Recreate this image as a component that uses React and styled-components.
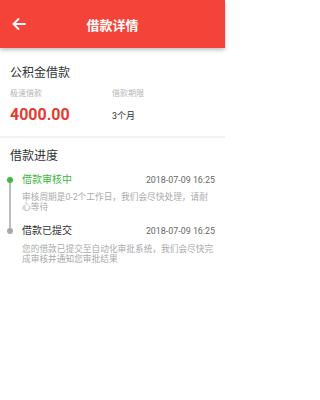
import React from 'react'
import styled, { createGlobalStyle } from 'styled-components'

const GlobalStyle = createGlobalStyle`
    body {
        margin: 0;
        background: #fff;
        font-family: Roboto, "Noto Sans CJK SC", sans-serif;
    }
`

const Page = styled.div`
    width: 225px;
    min-height: 400px;
    background: #fff;
`

const Header = styled.div`
    position: relative;
    height: 48px;
    background: #f4443a;
    box-shadow: 0 2px 4px rgba(0, 0, 0, 0.25);
    display: flex;
    align-items: center;
    justify-content: center;
    z-index: 1;
`

const BackButton = styled.div`
    position: absolute;
    left: 12px;
    top: 17px;
    width: 14px;
    height: 14px;
    display: flex;
`

const Title = styled.div`
    color: #fff;
    font-size: 13px;
    font-weight: 700;
    padding-top: 1px;
`

const Card = styled.div`
    padding: ${props => props.top}px 10px ${props => props.bottom}px;
    border-bottom: ${props => props.divider ? '2px solid #f1f1f1' : 'none'};
`

const CardTitle = styled.div`
    font-size: 12px;
    line-height: 18px;
    color: #333;
`

const InfoGrid = styled.div`
    display: grid;
    grid-template-columns: 102px 1fr;
    margin-top: 6px;
`

const Label = styled.div`
    font-size: 8px;
    line-height: 12px;
    color: #b5b5b5;
`

const Amount = styled.div`
    margin-top: 5px;
    font-size: 16px;
    line-height: 20px;
    font-weight: 700;
    color: #e53a2f;
`

const Term = styled.div`
    margin-top: 5px;
    font-size: 9px;
    line-height: 22px;
    color: #333;
`

const Timeline = styled.div`
    margin-top: 7px;
`

const Step = styled.div`
    position: relative;
    padding-left: 12px;
    padding-bottom: ${props => props.last ? 0 : 11}px;
`

const Dot = styled.span`
    position: absolute;
    left: -3px;
    top: 5px;
    width: 6px;
    height: 6px;
    border-radius: 50%;
    background: ${props => props.active ? '#42b83f' : '#a8a8a8'};
    z-index: 1;
`

const Line = styled.span`
    position: absolute;
    left: -1px;
    top: 8px;
    bottom: -8px;
    width: 2px;
    background: #bdbdbd;
`

const StepHead = styled.div`
    display: flex;
    justify-content: space-between;
    align-items: center;
    line-height: 16px;
`

const StepName = styled.div`
    font-size: 10px;
    color: ${props => props.active ? '#42b83f' : '#333'};
`

const StepTime = styled.div`
    font-size: 8.9px;
    color: #666;
`

const StepDesc = styled.div`
    margin-top: ${props => props.gap}px;
    font-size: 8.7px;
    line-height: 10px;
    color: #aaa;
`

const steps = [
    {
        name: '借款审核中',
        time: '2018-07-09 16:25',
        desc: '审核周期是0-2个工作日，我们会尽快处理，请耐心等待',
        active: true,
    },
    {
        name: '借款已提交',
        time: '2018-07-09 16:25',
        desc: '您的借款已提交至自动化审批系统，我们会尽快完成审核并通知您审批结果',
    },
]

function App() {
    return (
        <Page>
            <GlobalStyle />
            <Header>
                <BackButton>
                    <svg width="14" height="14" viewBox="0 0 14 14" fill="none" stroke="#fff" strokeWidth="1.8" strokeLinecap="round" strokeLinejoin="round">
                        <path d="M13 7H1.5" />
                        <path d="M6.5 2L1.5 7l5 5" />
                    </svg>
                </BackButton>
                <Title>借款详情</Title>
            </Header>
            <Card top={16} bottom={9} divider>
                <CardTitle>公积金借款</CardTitle>
                <InfoGrid>
                    <div>
                        <Label>极速借款</Label>
                        <Amount>4000.00</Amount>
                    </div>
                    <div>
                        <Label>借款期限</Label>
                        <Term>3个月</Term>
                    </div>
                </InfoGrid>
            </Card>
            <Card top={9} bottom={10}>
                <CardTitle>借款进度</CardTitle>
                <Timeline>
                    {steps.map((step, i) => (
                        <Step key={i} last={i === steps.length - 1}>
                            {i < steps.length - 1 && <Line />}
                            <Dot active={step.active} />
                            <StepHead>
                                <StepName active={step.active}>{step.name}</StepName>
                                <StepTime>{step.time}</StepTime>
                            </StepHead>
                            <StepDesc gap={step.active ? 4 : 5}>{step.desc}</StepDesc>
                        </Step>
                    ))}
                </Timeline>
            </Card>
        </Page>
    )
}

export default App
